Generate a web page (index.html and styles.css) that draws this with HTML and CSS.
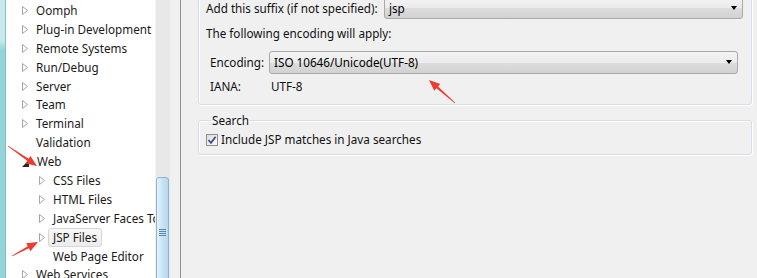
FILE: index.html
```html
<!DOCTYPE html>
<html lang="en">
  <head>
    <meta charset="UTF-8" />
    <title>Preferences - JSP Files</title>
    <link rel="stylesheet" href="styles.css">
  </head>
  <body>
    <svg class="defs" width="0" height="0">
      <symbol id="closed" viewBox="0 0 6 9">
        <path d="M0.5 0.5 L5.5 4.5 L0.5 8.5 Z" fill="#fff" stroke="#a6a6a6" />
      </symbol>
      <symbol id="open" viewBox="0 0 7 7">
        <path d="M7 0 L7 7 L0 7 Z" fill="#262626" />
      </symbol>
    </svg>

    <div class="window">
      <aside class="sidebar">
        <div class="strip"></div>
        <ul class="tree">
          <li class="item"><svg class="twisty"><use href="#closed" /></svg><span class="label">Oomph</span></li>
          <li class="item"><svg class="twisty"><use href="#closed" /></svg><span class="label">Plug-in Development</span></li>
          <li class="item"><svg class="twisty"><use href="#closed" /></svg><span class="label">Remote Systems</span></li>
          <li class="item"><svg class="twisty"><use href="#closed" /></svg><span class="label">Run/Debug</span></li>
          <li class="item"><svg class="twisty"><use href="#closed" /></svg><span class="label">Server</span></li>
          <li class="item"><svg class="twisty"><use href="#closed" /></svg><span class="label">Team</span></li>
          <li class="item"><svg class="twisty"><use href="#closed" /></svg><span class="label">Terminal</span></li>
          <li class="item"><span class="twisty"></span><span class="label">Validation</span></li>
          <li class="item"><svg class="twisty open"><use href="#open" /></svg><span class="label">Web</span></li>
          <li class="item child"><svg class="twisty"><use href="#closed" /></svg><span class="label">CSS Files</span></li>
          <li class="item child"><svg class="twisty"><use href="#closed" /></svg><span class="label">HTML Files</span></li>
          <li class="item child"><svg class="twisty"><use href="#closed" /></svg><span class="label">JavaServer Faces Tools</span></li>
          <li class="item child"><svg class="twisty"><use href="#closed" /></svg><span class="label selected">JSP Files</span></li>
          <li class="item child"><span class="twisty"></span><span class="label">Web Page Editor</span></li>
          <li class="item"><svg class="twisty"><use href="#closed" /></svg><span class="label">Web Services</span></li>
        </ul>
        <div class="scrollbar">
          <div class="thumb"><span class="grip"></span></div>
        </div>
        <div class="gutter"></div>
      </aside>

      <div class="sash"></div>

      <main class="prefs">
        <div class="group creating">
          <div class="row suffix">
            <span class="suffix-label">Add this suffix (if not specified):</span>
            <div class="combo">jsp<span class="drop"></span></div>
          </div>
          <div class="row note">The following encoding will apply:</div>
          <div class="encoding">
            <div class="row">
              <span class="enc-label">Encoding:</span>
              <div class="combo wide">ISO 10646/Unicode(UTF-8)<span class="drop"></span></div>
            </div>
            <div class="row iana">
              <span class="enc-label">IANA:</span>
              <span>UTF-8</span>
            </div>
          </div>
        </div>

        <fieldset class="group search">
          <legend>Search</legend>
          <label class="check">
            <span class="box">
              <svg width="10" height="10" viewBox="0 0 10 10"><path d="M1.5 5 L4 7.8 L8.6 1.8" fill="none" stroke="#3b4a8c" stroke-width="1.7" /></svg>
            </span>
            Include JSP matches in Java searches
          </label>
        </fieldset>
      </main>
    </div>

    <svg class="marks" width="757" height="278" viewBox="0 0 757 278">
      <polygon points="8.23,145.67 28.62,158.76 30.5,156.05 37,166 25.38,163.45 27.26,160.74 7.77,146.33" />
      <polygon points="11.81,255.65 27.74,246.15 26.18,243.25 38,242 30.44,251.17 28.88,248.27 12.19,256.35" />
      <polygon points="455.27,102.7 438.04,86.39 440.22,83.92 429,80 434.26,90.66 436.44,88.19 454.73,103.3" />
    </svg>
  </body>
</html>
```

FILE: styles.css
```css
* {
  box-sizing: border-box;
}

body {
  margin: 0;
  width: 757px;
  height: 278px;
  overflow: hidden;
  position: relative;
  background-color: #f0f0f0;
  font-family: "Noto Sans", Arial, sans-serif;
  font-size: 11.7px;
  color: #111;
}

.defs {
  position: absolute;
}

.window {
  display: flex;
  height: 278px;
  overflow: hidden;
}

/* left tree */
.sidebar {
  display: flex;
  width: 180px;
  flex-shrink: 0;
}

.strip {
  width: 6px;
  background: linear-gradient(#c9eaec 0, #c9eaec 40px, #94d4d8 50px);
  border-right: 1px solid #7fc2c7;
}

.tree {
  list-style: none;
  margin: 0;
  padding: 1px 0 0;
  width: 149px;
  background-color: #fff;
  overflow: hidden;
}

.item {
  display: flex;
  align-items: center;
  height: 18.9px;
  padding-left: 16px;
  white-space: nowrap;
  color: #1a1a1a;
}

.item.child {
  padding-left: 33px;
}

.twisty {
  width: 6px;
  height: 9px;
  flex-shrink: 0;
  margin-right: 8px;
}

.twisty.open {
  width: 7px;
  height: 7px;
  margin-top: 3px;
}

.item .label {
  line-height: 15px;
  padding: 1px 4px;
  margin-left: -5px;
  border: 1px solid transparent;
  border-radius: 3px;
}

.item .label.selected {
  border-color: #d6d6d6;
  background: linear-gradient(#f8f8f8, #ececec);
}

.scrollbar {
  width: 15px;
  padding-top: 177px;
  background-color: #e8e8e8;
  border-left: 1px solid #f2f2f2;
  overflow: hidden;
}

.thumb {
  height: 110px;
  margin: 0 1px 0 0;
  border: 1px solid #8fb4d0;
  border-radius: 3px;
  background: linear-gradient(to right, #e6f2fb, #c9e3f6 50%, #b6d8f0);
  padding-top: 51px;
  display: flex;
  justify-content: center;
}

.grip {
  width: 7px;
  height: 7px;
  background: repeating-linear-gradient(#5b87a8 0, #5b87a8 1px, transparent 1px, transparent 2px);
}

.gutter {
  width: 10px;
  background-color: #f0f0f0;
}

.sash {
  width: 1px;
  background-color: #8e8e8e;
}

/* right side */
.prefs {
  flex: 1;
  padding: 0 5px 0 17px;
}

.group {
  border: 1px solid #d5dfe5;
  border-radius: 3px;
  box-shadow: inset 1px 1px 0 #fff, 1px 1px 0 #fff;
}

.creating {
  margin-top: -8px;
  padding: 4px 8px 10px 7px;
}

.row {
  display: flex;
  align-items: center;
  line-height: 15px;
}

.suffix-label {
  width: 178px;
}

.combo {
  position: relative;
  flex: 1;
  height: 22px;
  line-height: 20px;
  padding: 0 4px;
  border: 1px solid #a9a9a9;
  border-radius: 3px;
  background: linear-gradient(#f3f3f3, #ebebeb 50%, #dddddd 50%, #d2d2d2);
  color: #000;
}

.combo.wide {
  height: 23px;
  line-height: 21px;
}

.drop {
  position: absolute;
  right: 5px;
  top: 8px;
  border-left: 3.5px solid transparent;
  border-right: 3.5px solid transparent;
  border-top: 4px solid #000;
}

.note {
  margin-top: 7px;
}

.encoding {
  margin-top: 10px;
  padding: 0 5px 0 4px;
}

.enc-label {
  width: 59px;
}

.iana {
  margin-top: 5px;
}

.iana .enc-label {
  width: 61px;
}

.search {
  margin: 8px 0 0;
  padding: 4px 7px 7px;
  min-width: 0;
}

.search legend {
  padding: 0 1px;
  margin-left: 5px;
  line-height: 15px;
}

.check {
  display: flex;
  align-items: center;
  line-height: 15px;
}

.box {
  display: flex;
  align-items: center;
  justify-content: center;
  width: 12px;
  height: 12px;
  margin-right: 3px;
  border: 1px solid #8e8f8f;
  background: linear-gradient(135deg, #dcdcdc, #fbfbfb);
}

/* red annotation arrows */
.marks {
  position: absolute;
  left: 0;
  top: 0;
  pointer-events: none;
}

.marks polygon {
  fill: #ee3b30;
}
```
